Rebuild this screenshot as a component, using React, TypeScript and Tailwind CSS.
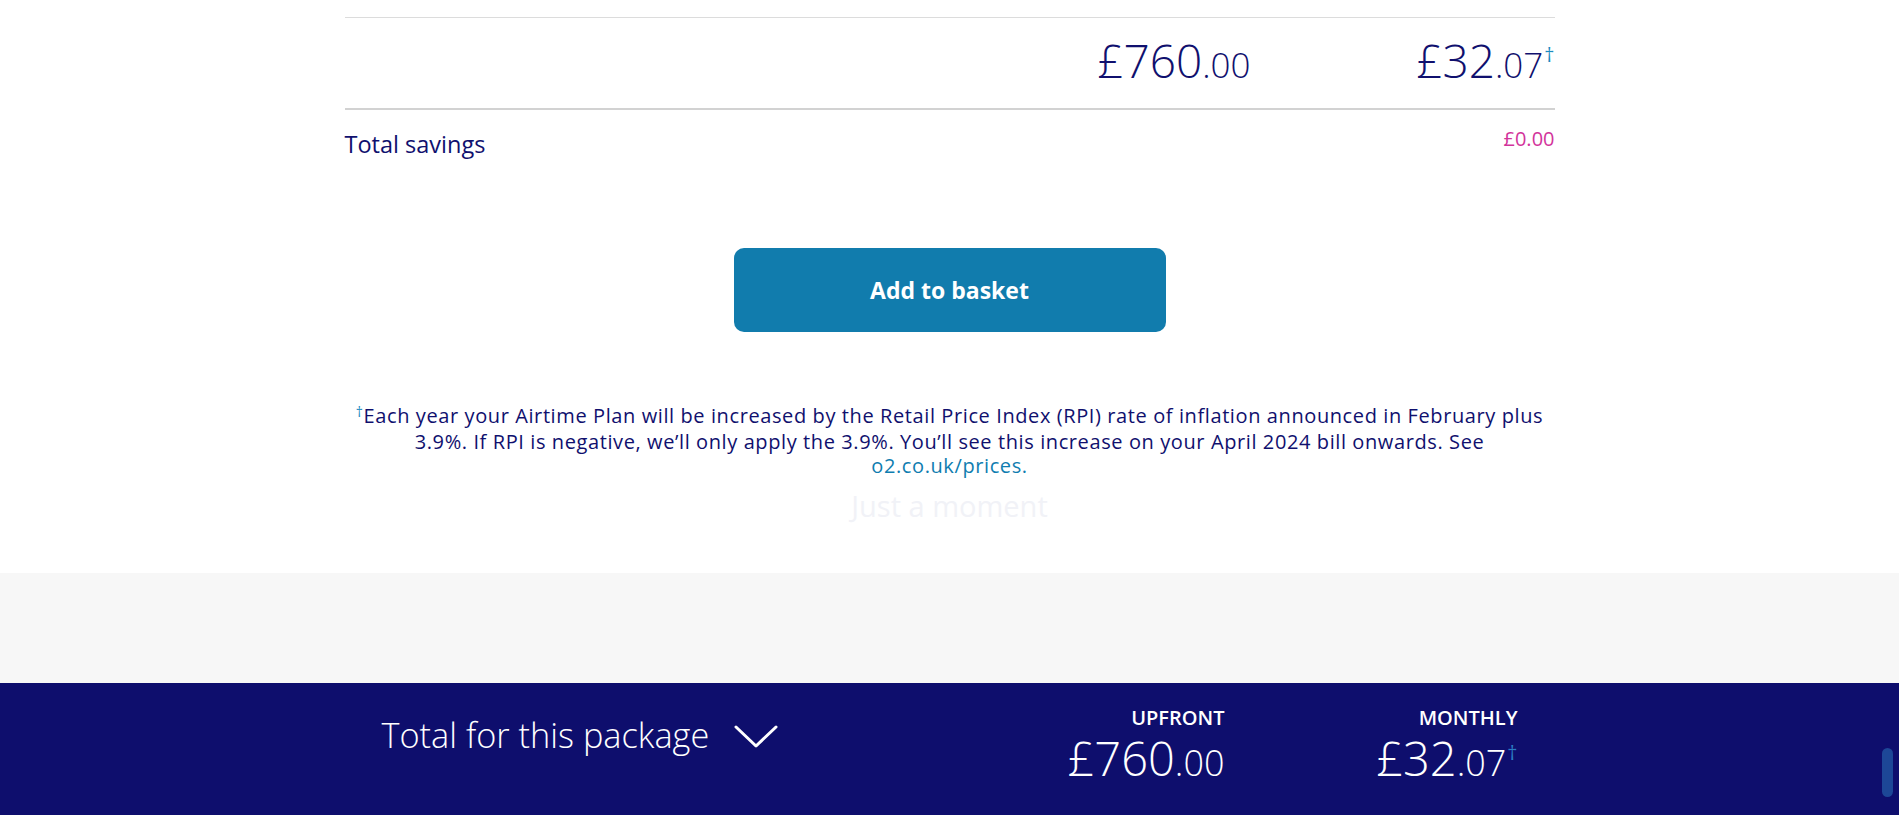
export default function App() {
  return (
    <div className="h-[815px] overflow-hidden bg-white font-['Open_Sans',sans-serif] text-[#10106e]">
      <div className="h-[573px] bg-white">
        <div className="mx-auto w-[1210px] pt-[17px]">
          <div className="flex h-[93px] justify-end border-t border-b-2 border-t-[#dcdcdc] border-b-[#d2d2d2] pt-[19px]">
            <div className="text-right text-[46px] font-light leading-[46px]">
              £760<span className="text-[35px]">.00</span>
            </div>
            <div className="w-[304px] text-right text-[46px] font-light leading-[46px]">
              £32<span className="text-[35px]">.07</span>
              <span className="relative -top-[16px] ml-[1px] text-[20px] font-normal text-[#1b8bc0]">†</span>
            </div>
          </div>
          <div className="flex items-start justify-between pt-[15px]">
            <div className="mt-[3px] text-[23.5px] leading-[32px]">Total savings</div>
            <div className="text-[20px] leading-[28px] text-[#d2349b]">£0.00</div>
          </div>
        </div>
        <div className="mt-[88px] flex justify-center">
          <button className="h-[84px] w-[432px] rounded-[10px] bg-[#117cad] text-[23px] font-bold text-white">
            Add to basket
          </button>
        </div>
        <p className="mx-auto mt-[72px] w-[1200px] text-center text-[20px] leading-[24px] tracking-[0.6px]">
          <span className="relative -top-[6px] text-[14px] text-[#1b8bc0]">†</span>Each year your Airtime Plan
          will be increased by the Retail Price Index (RPI) rate of inflation announced in February plus 3.9%. If
          RPI is negative, we’ll only apply the 3.9%. You’ll see this increase on your April 2024 bill onwards. See{" "}
          <span className="text-[#0f7db0]">o2.co.uk/prices.</span>
        </p>
        <div className="mt-[8px] text-center text-[29px] leading-[40px] text-[#f1f2f7]">Just a moment</div>
      </div>
      <div className="h-[110px] bg-[#f7f7f7]" />
      <div className="relative h-[132px] bg-[#0e0e6d] text-white">
        <div className="mx-auto flex w-[1136px] items-start justify-between">
          <div className="flex items-center pt-[30px]">
            <span className="text-[34.3px] font-light leading-[44px]">Total for this package</span>
            <svg className="ml-[25px] mt-[4px]" width="44" height="24" viewBox="0 0 44 24" fill="none">
              <polyline points="2,2 22,21 42,2" stroke="white" strokeWidth="3" strokeLinecap="round" strokeLinejoin="round" />
            </svg>
          </div>
          <div className="flex pt-[23px]">
            <div className="text-right">
              <div className="text-[20px] font-semibold leading-[24px]">UPFRONT</div>
              <div className="mt-[4px] text-[47px] font-light leading-[48px]">
                £760<span className="text-[36px]">.00</span>
              </div>
            </div>
            <div className="w-[293px] text-right">
              <div className="text-[20px] font-semibold leading-[24px]">MONTHLY</div>
              <div className="mt-[4px] text-[47px] font-light leading-[48px]">
                £32<span className="text-[36px]">.07</span>
                <span className="relative -top-[16px] ml-[1px] text-[20px] font-normal text-[#2a7cc4]">†</span>
              </div>
            </div>
          </div>
        </div>
        <div className="absolute right-[6px] top-[65px] h-[49px] w-[11px] rounded-full bg-[#1d4797]" />
      </div>
    </div>
  );
}
